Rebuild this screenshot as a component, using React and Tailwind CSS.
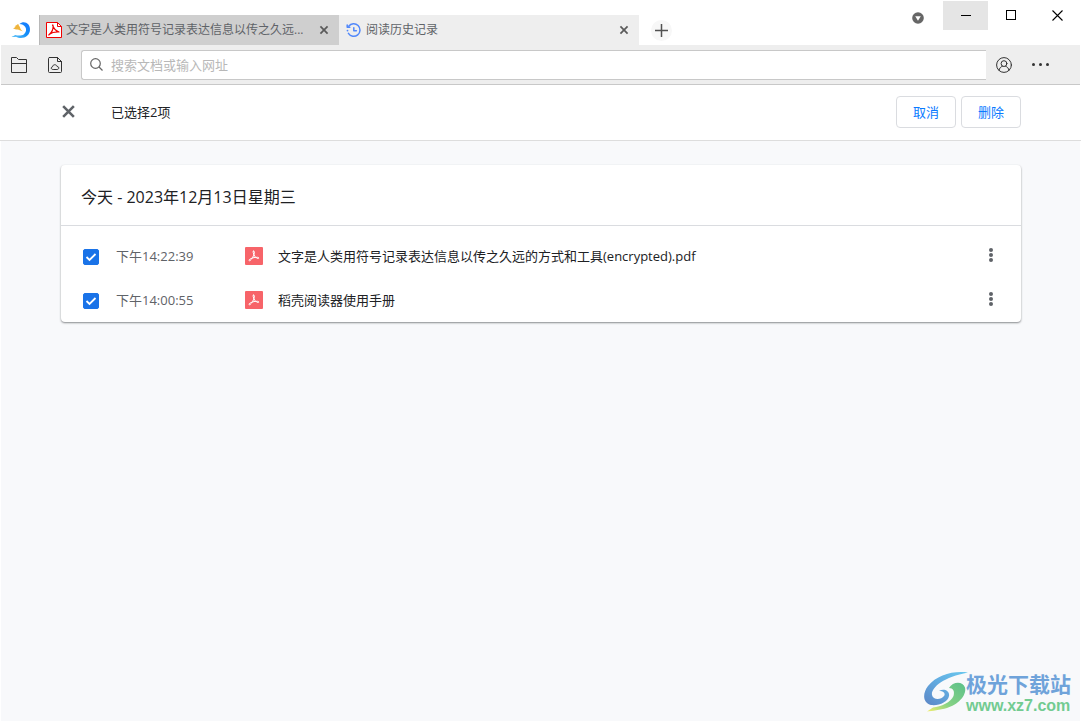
import React, { useState } from "react";

const stroke = { fill: "none", stroke: "currentColor", strokeLinecap: "round", strokeLinejoin: "round" };

function AppLogo() {
  return (
    <svg className="size-5" viewBox="0 0 20 20" aria-hidden="true">
      <defs>
        <linearGradient id="moon" x1="0" y1="1" x2="1" y2="0">
          <stop offset="0" stopColor="#6ccbf7" />
          <stop offset="0.5" stopColor="#1590f8" />
          <stop offset="1" stopColor="#1677ff" />
        </linearGradient>
      </defs>
      <path d="M8.500 4C11 1.500 15 1.600 17.200 4.300c2.700 3.400 2.300 8.500-.8 11.300-3.500 3.200-8.500 3-11.400 1.200-1.500.4-3.200.3-4.500-.3 1.500-.1 2.700-.6 3.700-1.500 3 .9 6.600.9 8.800-.8 2.300-1.800 2.700-5 1.300-7.200C12.900 5 11 4 8.500 4z" fill="url(#moon)" />
      <path d="M2 8.300c1.500-.2 2.200-1 2.600-2L3.400 6.200C5 5.700 5.700 4.700 7.300 4c.2 1.500 1.500 2.200 1.900 4 .3 1.400 1.300 2.300 2.600 3.200C9.500 11 8 9.900 6.500 9.600 4.800 9.400 3.300 9.200 2 8.300z" fill="#efb43c" />
    </svg>
  );
}

function PdfMark({ className }) {
  return (
    <svg className={className} viewBox="0 0 18 18" aria-hidden="true">
      <path {...stroke} d="M8.300 4.200c1-.6 1.300.6 1 1.800C8.800 8.800 7 12.200 5 13.600c-.8.5-1.500-.2-.7-1C6 11.200 9 10.200 12.600 10.300c1.600.1 1.600 1.300.3 1.200C10.800 11.200 8.700 8.200 8.200 5.600c-.1-.6-.1-1.100.1-1.400z" />
    </svg>
  );
}

function PdfTabIcon() {
  return (
    <svg className="size-4 shrink-0" viewBox="0 0 16 16" aria-hidden="true">
      <path d="M.5.5h11l4 4v11H.5z" fill="#fff" stroke="#f00000" />
      <path d="M11.500 .5v4h4" fill="none" stroke="#f00000" />
      <path d="M6.500 3c1 3 2.500 5.500 6.500 7M7 3C7.500 7 6 10.500 2.800 13M3 12.500C6 10.300 9 9.800 13 10" fill="none" stroke="#f00000" strokeWidth="1.200" strokeLinecap="round" />
    </svg>
  );
}

function HistoryIcon() {
  return (
    <svg className="size-4 shrink-0 text-[#5188fb]" viewBox="0 0 16 16" aria-hidden="true">
      <path {...stroke} strokeWidth="1.500" d="M2.700 4.200A6.300 6.300 0 1 1 2.400 11.400" />
      <path {...stroke} strokeWidth="1.500" d="M1.200 3v2.300h2.600M7.800 5.800v2.900h2.600" />
      <circle cx="1.500" cy="8.600" r=".9" fill="currentColor" />
    </svg>
  );
}

function CloseMark({ className }) {
  return (
    <svg className={className} viewBox="0 0 14 14" aria-hidden="true">
      <path d="M2 2l10 10M12 2 2 12" fill="none" stroke="currentColor" strokeWidth="2.400" />
    </svg>
  );
}

function WatermarkLogo() {
  return (
    <svg className="h-[42px] w-[46px] shrink-0" viewBox="0 0 46 42" aria-hidden="true">
      <defs>
        <linearGradient id="wmBlue" x1="1" y1="0" x2="0" y2="1">
          <stop offset="0" stopColor="#69c8ee" />
          <stop offset="0.5" stopColor="#62abe0" />
          <stop offset="1" stopColor="#5c86c6" />
        </linearGradient>
        <linearGradient id="wmGreen" x1="1" y1="0" x2="0" y2="1">
          <stop offset="0" stopColor="#5cc08a" />
          <stop offset="0.6" stopColor="#86d284" />
          <stop offset="1" stopColor="#f3ee6c" />
        </linearGradient>
      </defs>
      <path d="M45 1.500C30-.5 14 4 5 15-1 23 0 32 8 34c8 1 17-3 18-9 1-5-5-8-10-5 4-.5 7 2 5 5-3 4-11 4-12-1C8 17 20 6 45 1.500z" fill="url(#wmBlue)" />
      <path d="M26 17C30 10 40 10 42 16.500 44 25 34 34 24 37c-7 2-15 3-20 3.500l6-4C18 36 28 31 30.500 25 32 20 30 17 26 17z" fill="url(#wmGreen)" />
    </svg>
  );
}

function Tab({ title, icon, active }) {
  return (
    <div className={"flex h-[30px] w-[300px] min-w-0 items-center pr-[7px] " + (active ? "bg-[#eeeeee] pl-[7px]" : "border-l border-[#b8b8b8] bg-[#cfcfcf] pl-[6px]")}>
      <a href="#tab" className="flex min-w-0 flex-1 items-center gap-1 text-[12px] leading-5 text-[#5f6368]">
        {icon}
        <span className="truncate">{title}</span>
      </a>
      <button type="button" aria-label="关闭标签页" className="flex size-4 shrink-0 items-center justify-center text-[#5a5a5a]">
        <CloseMark className="size-[10px]" />
      </button>
    </div>
  );
}

function TitleBar() {
  return (
    <header className="flex h-[45px] items-end">
      <div className="flex h-[30px] w-[39px] shrink-0 items-center justify-end pr-2"><AppLogo /></div>
      <Tab title="文字是人类用符号记录表达信息以传之久远..." icon={<PdfTabIcon />} />
      <Tab title="阅读历史记录" icon={<HistoryIcon />} active />
      <div className="flex h-[30px] items-center pl-3">
        <button type="button" aria-label="新建标签页" className="flex size-[21px] items-center justify-center rounded-full bg-[#f7f7f7] text-[#505050]">
          <svg className="size-[13px]" viewBox="0 0 13 13"><path d="M6.500 0v13M0 6.500h13" stroke="currentColor" strokeWidth="1.500" /></svg>
        </button>
      </div>
      <div className="ml-auto flex h-full items-start pt-px pr-px">
        <button type="button" aria-label="下拉菜单" className="flex h-[34px] w-[50px] items-center justify-center text-[#666666]">
          <svg className="size-3" viewBox="0 0 12 12"><circle cx="6" cy="6" r="5.800" fill="currentColor" /><path d="M3.200 4.200h5.600L6 8.800z" fill="#fff" /></svg>
        </button>
        <button type="button" aria-label="最小化" className="flex h-[29px] w-[45px] items-center justify-center bg-[#e5e5e5]">
          <span className="h-px w-[10px] bg-black" />
        </button>
        <button type="button" aria-label="最大化" className="flex h-7 w-[46px] items-center justify-center">
          <span className="size-[10px] border border-black" />
        </button>
        <button type="button" aria-label="关闭" className="flex h-7 w-[46px] items-center justify-center">
          <svg className="size-[11px]" viewBox="0 0 11 11"><path d="M.5.5l10 10M10.500.5l-10 10" stroke="#000" strokeWidth="1.100" /></svg>
        </button>
      </div>
    </header>
  );
}

function Toolbar() {
  return (
    <div className="mx-px flex h-10 items-center border-b border-[#c8c8c8] bg-[#eeeeee] text-[#333333]">
      <button type="button" aria-label="打开文件" className="flex h-10 w-9 items-center justify-center">
        <svg className="size-4" viewBox="0 0 16 16"><path d="M.5 15.500V.5h5l2 2h8v13zM.5 6.500h15" fill="none" stroke="currentColor" /></svg>
      </button>
      <button type="button" aria-label="云文档" className="flex h-10 w-9 items-center justify-center">
        <svg className="h-4 w-[14px]" viewBox="0 0 14 16"><path {...stroke} d="M1.500 .5h8l4 4v10a1 1 0 0 1-1 1h-11a1 1 0 0 1-1-1v-13a1 1 0 0 1 1-1zM9.500 .5v4h4" /><path {...stroke} d="M4.800 12.500c-2 0-2.200-2.400-.3-2.700.3-2.700 4.100-2.700 4.600-.3 2.300 0 2.300 3 .2 3z" /></svg>
      </button>
      <label className="ml-2 flex h-[30px] flex-1 items-center gap-2 rounded-l-[3px] border border-r-0 border-[#c8c8c8] bg-white pl-2">
        <svg className="size-[13px] shrink-0 text-[#666666]" viewBox="0 0 13 13"><circle cx="5.500" cy="5.500" r="4.800" fill="none" stroke="currentColor" strokeWidth="1.200" /><path d="M9 9l3.500 3.500" stroke="currentColor" strokeWidth="1.300" /></svg>
        <input type="text" aria-label="搜索文档或输入网址" placeholder="搜索文档或输入网址" className="h-full min-w-0 flex-1 bg-transparent text-[13px] text-[#333333] outline-none placeholder:text-[#b8b8b8]" />
      </label>
      <button type="button" aria-label="账户" className="flex h-10 w-9 items-center justify-center">
        <svg className="size-4" viewBox="0 0 16 16"><circle {...stroke} cx="8" cy="8" r="7.400" /><circle {...stroke} cx="8" cy="6.600" r="2.900" /><path {...stroke} d="M3 13.400c.4-2.400 1.800-3.600 3.400-4.200M13 13.400c-.4-2.400-1.800-3.600-3.400-4.200" /></svg>
      </button>
      <button type="button" aria-label="更多" className="mr-[22px] flex h-10 w-9 items-center justify-center gap-1">
        <span className="size-[3px] rounded-full bg-[#333333]" /><span className="size-[3px] rounded-full bg-[#333333]" /><span className="size-[3px] rounded-full bg-[#333333]" />
      </button>
    </div>
  );
}

const items = [
  { time: "下午14:22:39", name: "文字是人类用符号记录表达信息以传之久远的方式和工具(encrypted).pdf" },
  { time: "下午14:00:55", name: "稻壳阅读器使用手册" },
];

function HistoryRow({ time, name }) {
  const [checked, setChecked] = useState(true);
  return (
    <li className="flex h-11 items-center pl-[22px] pr-6">
      <label className="flex shrink-0 items-center gap-[17px]">
        <span className="grid place-items-center pt-[2px]">
          <input type="checkbox" checked={checked} onChange={(e) => setChecked(e.target.checked)} className="peer col-start-1 row-start-1 size-4 appearance-none rounded-[2px] border border-[#1a73e8] checked:bg-[#1a73e8]" />
          <svg className="pointer-events-none col-start-1 row-start-1 hidden size-3 text-white peer-checked:block" viewBox="0 0 12 12"><path d="M1.500 6l3 3 6-6" fill="none" stroke="currentColor" strokeWidth="1.800" /></svg>
        </span>
        <span className="w-[129px] text-[13px] leading-5 text-[#5f6368]">{time}</span>
      </label>
      <span className="flex size-[18px] shrink-0 items-center justify-center rounded-[1px] bg-[#f76469] text-white">
        <PdfMark className="size-[18px]" />
      </span>
      <a href="#document" className="ml-[15px] min-w-0 flex-1 truncate text-[13px] leading-5 text-[#202124]">{name}</a>
      <button type="button" aria-label="更多操作" className="flex h-6 w-3 flex-col items-center justify-center gap-px pb-[2px]">
        <span className="size-1 rounded-full bg-[#5f6368]" /><span className="size-1 rounded-full bg-[#5f6368]" /><span className="size-1 rounded-full bg-[#5f6368]" />
      </button>
    </li>
  );
}

export default function App() {
  return (
    <div className="flex min-h-screen flex-col bg-white font-['Open_Sans','Noto_Sans_CJK_SC',sans-serif]">
      <TitleBar />
      <Toolbar />
      <div className="flex h-14 items-center border-b border-[#dddddd] px-[60px] pb-[2px]">
        <button type="button" aria-label="取消选择" className="flex size-4 items-center justify-center text-[#5f6368]">
          <CloseMark className="size-[15px]" />
        </button>
        <span className="ml-[35px] flex-1 text-[13px] leading-5 text-[#202124]">已选择2项</span>
        <div className="flex gap-[5px] text-[13px] leading-5 text-[#0a7aff]">
          <button type="button" className="h-8 w-[60px] rounded-[4px] border border-[#dadce0]">取消</button>
          <button type="button" className="h-8 w-[60px] rounded-[4px] border border-[#dadce0]">删除</button>
        </div>
      </div>
      <main className="mx-px flex flex-1 flex-col bg-[#f8f9fb] pt-6 pr-[59px] pl-[60px]">
        <section className="rounded-[4px] bg-white shadow-[0_1px_2px_#3c404399]">
          <h2 className="flex h-[61px] items-center border-b border-[#dadce0] px-5 pt-1 text-[16px] leading-6 text-[#202124]">今天 - 2023年12月13日星期三</h2>
          <ul className="pt-2">
            {items.map((item) => <HistoryRow key={item.time} {...item} />)}
          </ul>
        </section>
      </main>
      <aside className="absolute right-[10px] bottom-[7px] flex items-center">
        <WatermarkLogo />
        <div className="-ml-[3px] flex flex-col">
          <span className="text-[21px] leading-7 font-bold text-[#6fa3da]">极光下载站</span>
          <span className="font-['Liberation_Sans',sans-serif] text-[16px] leading-4 font-bold text-[#72cb91]">www.xz7.com</span>
        </div>
      </aside>
    </div>
  );
}
